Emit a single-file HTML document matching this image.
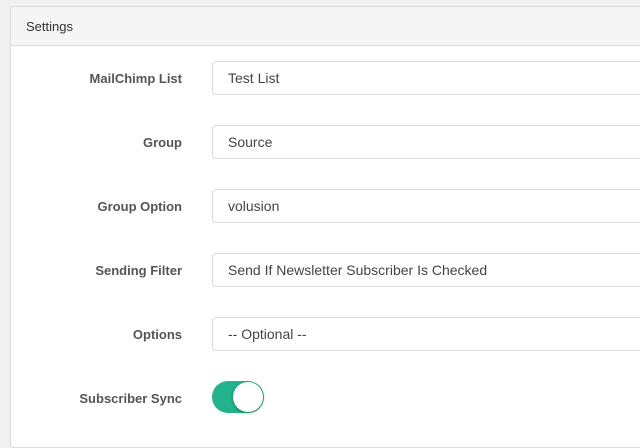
<!DOCTYPE html>
<html><head><style>
body{margin:0;width:640px;height:426px;background:#f0f0f0;font-family:"Liberation Sans",sans-serif;overflow:hidden;position:relative}
.panel{position:absolute;left:10px;top:6px;width:700px;height:440px;background:#fff;border:1px solid #ddd;border-radius:4px}
.hd{height:38px;background:#f5f5f5;border-bottom:1px solid #ddd;font-size:13px;color:#333;line-height:40px;padding-left:15px;border-radius:4px 4px 0 0}
.lbl{position:absolute;left:0;width:171px;font-size:13px;font-weight:bold;color:#555;text-align:right;white-space:nowrap}
.in{position:absolute;left:201px;width:500px;height:32px;border:1px solid #ddd;border-radius:4px;font-size:14px;color:#444;line-height:32px;padding-left:15px;box-sizing:content-box}
.tg{position:absolute;left:201px;top:374px;width:52px;height:32px;border-radius:16px;background:#22b38c}
.tg div{position:absolute;right:1px;top:1px;width:30px;height:30px;border-radius:50%;background:#fff;box-shadow:0 1px 3px rgba(0,0,0,.35)}
</style></head><body>
<div class="panel">
<div class="hd">Settings</div>
<div class="lbl" style="top:64px">MailChimp List</div><div class="in" style="top:54px">Test List</div>
<div class="lbl" style="top:128px">Group</div><div class="in" style="top:118px">Source</div>
<div class="lbl" style="top:192px">Group Option</div><div class="in" style="top:182px">volusion</div>
<div class="lbl" style="top:256px">Sending Filter</div><div class="in" style="top:246px">Send If Newsletter Subscriber Is Checked</div>
<div class="lbl" style="top:320px">Options</div><div class="in" style="top:310px">-- Optional --</div>
<div class="lbl" style="top:384px">Subscriber Sync</div><div class="tg"><div></div></div>
</div>
</body></html>
